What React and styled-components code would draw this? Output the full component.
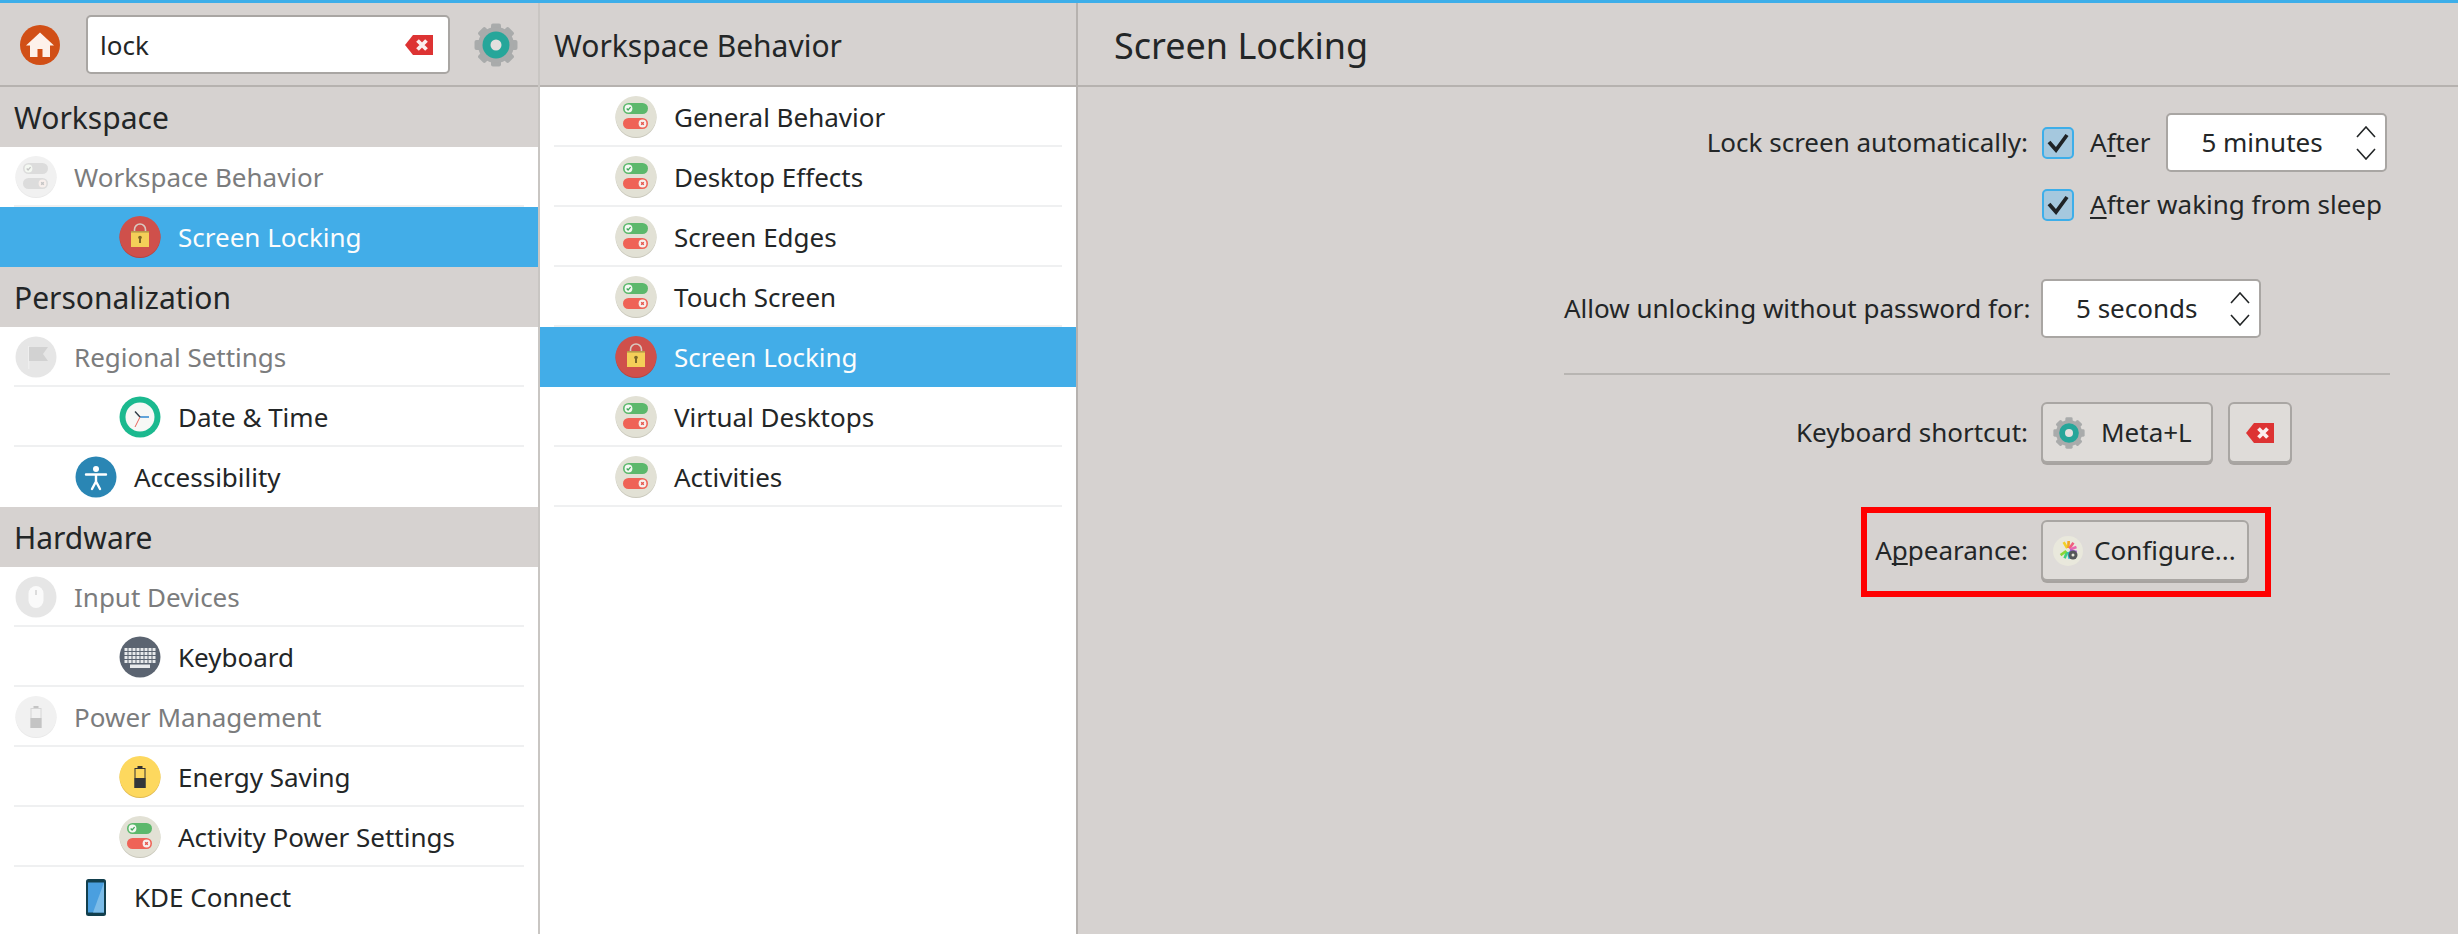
import React from 'react';
import styled, { createGlobalStyle } from 'styled-components';

const GlobalStyle = createGlobalStyle`
  html, body { margin: 0; padding: 0; background: #d6d2d0; }
  body { font-family: "Noto Sans", sans-serif; color: #232627; overflow: hidden; }
  u { text-decoration-thickness: 2px; text-underline-offset: 3px; text-decoration-skip-ink: none; }
`;

const Toggles = ({ faded }) => (
  <svg width="42" height="42" viewBox="0 0 42 42">
    <circle cx="21" cy="21.5" r="20.5" fill={faded ? '#e9e9e9' : '#c9c8bb'} />
    <circle cx="21" cy="20.5" r="20.5" fill={faded ? '#f1f1f1' : '#e2e1d5'} />
    <rect x="8" y="7" width="25" height="11" rx="5.5" fill={faded ? '#dcdcdc' : '#5cb86c'} />
    <rect x="8" y="22" width="25" height="11" rx="5.5" fill={faded ? '#dcdcdc' : '#ef6357'} />
    <circle cx="13.5" cy="12.5" r="3.9" fill="#f4f8f2" />
    <circle cx="27.5" cy="27.5" r="3.9" fill="#f7efec" />
    <path d="M11.700 12.500l1.400 1.500 2.500-2.900" fill="none" stroke={faded ? '#c4c4c4' : '#41a85c'} strokeWidth="1.3" />
    <path d="M26.200 26.200l2.600 2.600m0-2.600l-2.600 2.600" stroke={faded ? '#c4c4c4' : '#e4544a'} strokeWidth="1.3" />
  </svg>
);

const LockIcon = () => (
  <svg width="42" height="42" viewBox="0 0 42 42">
    <circle cx="21" cy="21.5" r="20.5" fill="#b9433f" />
    <circle cx="21" cy="20.5" r="20.5" fill="#cf504b" />
    <path d="M15.500 16v-2.500a5.500 5.500 0 0 1 11 0V16" fill="none" stroke="#d9c9c0" strokeWidth="1.6" />
    <rect x="12" y="15" width="18" height="16" fill="#f4cf58" />
    <rect x="12" y="15" width="18" height="1.6" fill="#b79a4a" />
    <circle cx="21" cy="21.5" r="1.8" fill="#7b6628" />
    <rect x="20" y="22" width="2" height="5" fill="#7b6628" />
  </svg>
);

const ClockIcon = () => (
  <svg width="42" height="42" viewBox="0 0 42 42">
    <circle cx="21" cy="21" r="20.5" fill="#1bb98f" />
    <circle cx="21" cy="21" r="14.5" fill="#f7f8f6" />
    <path d="M21 21h9" stroke="#3b8fd4" strokeWidth="1.6" />
    <path d="M21 21l-5-5.500" stroke="#2f3a45" strokeWidth="1.4" />
    <path d="M21 21l-5 10" stroke="#e8635a" strokeWidth="1" />
  </svg>
);

const AccessIcon = () => (
  <svg width="42" height="42" viewBox="0 0 42 42">
    <circle cx="21" cy="21" r="20.5" fill="#2a86b4" />
    <circle cx="21" cy="13" r="3" fill="#fff" />
    <path d="M11 18.500h20M21 18.500v7M21 25.500l-4 7.500M21 25.500l4 7.500" fill="none" stroke="#fff" strokeWidth="2.4" strokeLinecap="round" />
  </svg>
);

const KeyboardIcon = () => {
  const keys = [];
  for (let r = 0; r < 4; r++) {
    for (let c = 0; c < 8; c++) {
      keys.push(<rect key={`${r}-${c}`} x={5.5 + c * 4} y={12 + r * 4} width="3" height="3" fill="#e8eaec" />);
    }
  }
  return (
    <svg width="42" height="42" viewBox="0 0 42 42">
      <circle cx="21" cy="21" r="20.5" fill="#5b6471" />
      {keys}
      <rect x="11" y="28.5" width="20" height="3.5" fill="#e8eaec" />
    </svg>
  );
};

const BatteryIcon = ({ faded }) => (
  <svg width="42" height="42" viewBox="0 0 42 42">
    <circle cx="21" cy="21.5" r="20.5" fill={faded ? '#e9e9e9' : '#e0b94e'} />
    <circle cx="21" cy="20.5" r="20.5" fill={faded ? '#f1f1f1' : '#fdd85e'} />
    <rect x="18.5" y="10" width="5" height="3" fill={faded ? '#c4c4c4' : '#333'} />
    <rect x="16" y="12.5" width="10" height="19" fill="none" stroke={faded ? '#d6d6d6' : '#333'} strokeWidth="1" />
    <rect x="15.5" y="22" width="11" height="10" fill={faded ? '#c4c4c4' : '#33363a'} />
  </svg>
);

const FlagIcon = () => (
  <svg width="42" height="42" viewBox="0 0 42 42">
    <circle cx="21" cy="21" r="20.5" fill="#e6e6e6" />
    <rect x="13" y="10" width="1.4" height="23" fill="#eee" />
    <path d="M14 11h19l-5 7 5 7H14z" fill="#d2d2d2" />
  </svg>
);

const MouseIcon = () => (
  <svg width="42" height="42" viewBox="0 0 42 42">
    <circle cx="21" cy="21" r="20.5" fill="#e6e6e6" />
    <rect x="13.5" y="10" width="15" height="22" rx="7.5" fill="#fafafa" />
    <rect x="20.4" y="14" width="1.2" height="5" fill="#c8c8c8" />
  </svg>
);

const PhoneIcon = () => (
  <svg width="42" height="42" viewBox="0 0 42 42">
    <rect x="11" y="3" width="20" height="37" rx="2.5" fill="#123f4d" />
    <rect x="13" y="6.5" width="16" height="30" fill="#4a9fdf" />
    <path d="M29 6.500v30h-11z" fill="#7cbce8" />
  </svg>
);

const GearIcon = ({ size = 44 }) => (
  <svg width={size} height={size} viewBox="0 0 44 44">
    {[0, 45, 90, 135].map(a => (
      <rect key={a} x="17" y="0.5" width="10" height="43" rx="2" fill="#a9abab" transform={`rotate(${a} 22 22)`} />
    ))}
    <circle cx="22" cy="22" r="18" fill="#a9abab" />
    <circle cx="22" cy="22" r="13.5" fill="#26a69a" />
    <circle cx="22" cy="22" r="5.5" fill="#e3e0de" />
  </svg>
);

const ClearIcon = () => (
  <svg width="28" height="20" viewBox="0 0 28 20">
    <path d="M0 10L8 0h20v20H8z" fill="#dd3333" />
    <path d="M12.500 5.500l9 9m0-9l-9 9" stroke="#fbeeee" strokeWidth="3.8" />
  </svg>
);

const HomeIcon = () => (
  <svg width="40" height="40" viewBox="0 0 40 40">
    <circle cx="20" cy="20" r="20" fill="#d14f16" />
    <path d="M20 7.500L6 20.500h4V32h7.500v-8h5v8H30V20.500h4z" fill="#fdf1ea" />
  </svg>
);

const PaletteIcon = () => {
  const colors = ['#f2d027', '#f5a623', '#ef5f7f', '#e868b0', '#a05fd0', '#4f8fe8', '#2bb8d8', '#3fcf7f', '#8ad636'];
  return (
    <svg width="30" height="30" viewBox="0 0 30 30">
      <circle cx="15" cy="15" r="15" fill="#e9e8dc" />
      {colors.map((c, i) => (
        <rect key={c} x="13.900" y="5" width="2.600" height="7" fill={c} transform={`rotate(${i * 33 - 30} 15 14)`} />
      ))}
      <circle cx="20" cy="19" r="4.500" fill="#55575a" />
      <circle cx="20" cy="19" r="1.500" fill="#e9e8dc" />
    </svg>
  );
};

const Chevrons = () => (
  <svg width="22" height="34" viewBox="0 0 22 34">
    <path d="M2 11L11 1l9 10M2 23l9 10 9-10" fill="none" stroke="#232627" strokeWidth="1.600" />
  </svg>
);

const CheckMark = () => (
  <svg width="24" height="20" viewBox="0 0 24 20">
    <path d="M3 9l7 8L21 2" fill="none" stroke="#1f2326" strokeWidth="3.800" />
  </svg>
);

const Page = styled.div`
  height: 100vh;
  display: flex;
  flex-direction: column;
  border-top: 3px solid #3daee9;
  box-sizing: border-box;
`;

const Columns = styled.div`
  flex: 1;
  display: flex;
  min-height: 0;
`;

const Column = styled.div`
  width: ${p => p.$width}px;
  flex: none;
  display: flex;
  flex-direction: column;
  border-right: 2px solid ${p => p.$line};
`;

const Content = styled.div`
  flex: 1;
  min-width: 0;
`;

const Header = styled.div`
  height: 84px;
  flex: none;
  display: flex;
  align-items: center;
  box-sizing: border-box;
  border-bottom: 2px solid #b6b2af;
  padding-left: ${p => p.$pad}px;
  padding-top: ${p => p.$nudge || 0}px;
  font-size: ${p => p.$size}px;
  color: #232627;
`;

const HomeButton = styled.div`
  display: flex;
  margin-left: -6px;
  margin-right: 26px;
`;

const SearchBox = styled.div`
  width: 364px;
  height: 59px;
  box-sizing: border-box;
  background: #fff;
  border: 2px solid #a9a6a3;
  border-radius: 5px;
  display: flex;
  align-items: center;
  justify-content: space-between;
  padding: 0 15px 0 12px;
  font-size: 26px;
`;

const SearchGear = styled.div`
  display: flex;
  margin-left: 24px;
`;

const List = styled.div`
  flex: 1;
  background: #fff;
  display: flex;
  flex-direction: column;
`;

const Section = styled.div`
  height: 60px;
  flex: none;
  background: #d6d2d0;
  display: flex;
  align-items: center;
  padding-left: 14px;
  box-sizing: border-box;
  font-size: 30px;
`;

const Row = styled.div`
  height: 60px;
  flex: none;
  box-sizing: border-box;
  display: flex;
  align-items: center;
  gap: 17px;
  padding-left: ${p => p.$indent}px;
  font-size: 26px;
  position: relative;
  background: ${p => (p.$selected ? '#42ade8' : '#fff')};
  color: ${p => (p.$selected ? '#fcfcfc' : p.$faded ? '#7b7c7d' : '#232627')};

  &::after {
    content: '';
    display: ${p => (p.$selected || p.$plain ? 'none' : 'block')};
    position: absolute;
    left: 14px;
    right: 14px;
    bottom: 0;
    height: 2px;
    background: #eff0f1;
  }
`;

const Form = styled.div`
  width: 826px;
  margin-left: 486px;
  display: flex;
  flex-direction: column;
  font-size: 26px;
  line-height: 35px;
  position: relative;
`;

const FormRow = styled.div`
  display: grid;
  grid-template-columns: 464px auto;
  column-gap: 13px;
  align-items: center;
  margin-top: ${p => p.$top}px;
  position: relative;
`;

const Label = styled.div`
  text-align: right;
  white-space: nowrap;
`;

const Fields = styled.div`
  display: flex;
  align-items: center;
  gap: ${p => p.$gap || 0}px;
`;

const Check = styled.div`
  width: 32px;
  height: 32px;
  box-sizing: border-box;
  flex: none;
  background: #a5c8de;
  border: 2px solid #3daee9;
  border-radius: 5px;
  display: flex;
  align-items: center;
  justify-content: center;
  margin: 0 16px 0 1px;
`;

const Spin = styled.div`
  width: ${p => p.$width}px;
  height: 59px;
  box-sizing: border-box;
  background: #fff;
  border: 2px solid #a9a6a3;
  border-radius: 5px;
  display: flex;
  align-items: center;
  justify-content: space-between;
  padding: 0 8px 0 33px;
  margin-left: ${p => p.$left || 0}px;
`;

const Button = styled.div`
  width: ${p => p.$width}px;
  height: 61px;
  box-sizing: border-box;
  background: #dfdcd9;
  border: 2px solid #a9a6a3;
  border-radius: 6px;
  box-shadow: 0 2px 0 #a7a3a0;
  display: flex;
  align-items: center;
  gap: ${p => p.$gap || 0}px;
  padding-left: ${p => p.$pad}px;
`;

const Divider = styled.div`
  height: 2px;
  background: #b8b5b2;
  margin-top: 35px;
`;

const Highlight = styled.div`
  position: absolute;
  left: 297px;
  top: -13px;
  width: 410px;
  height: 90px;
  box-sizing: border-box;
  border: 6px solid #ff0000;
  pointer-events: none;
`;

const App = () => {
  const nav = [
    { section: 'Workspace' },
    { text: 'Workspace Behavior', icon: <Toggles faded />, indent: 15, faded: true },
    { text: 'Screen Locking', icon: <LockIcon />, indent: 119, selected: true },
    { section: 'Personalization' },
    { text: 'Regional Settings', icon: <FlagIcon />, indent: 15, faded: true },
    { text: 'Date & Time', icon: <ClockIcon />, indent: 119 },
    { text: 'Accessibility', icon: <AccessIcon />, indent: 75, plain: true },
    { section: 'Hardware' },
    { text: 'Input Devices', icon: <MouseIcon />, indent: 15, faded: true },
    { text: 'Keyboard', icon: <KeyboardIcon />, indent: 119 },
    { text: 'Power Management', icon: <BatteryIcon faded />, indent: 15, faded: true },
    { text: 'Energy Saving', icon: <BatteryIcon />, indent: 119 },
    { text: 'Activity Power Settings', icon: <Toggles />, indent: 119 },
    { text: 'KDE Connect', icon: <PhoneIcon />, indent: 75, plain: true },
  ];
  const modules = ['General Behavior', 'Desktop Effects', 'Screen Edges', 'Touch Screen', 'Screen Locking', 'Virtual Desktops', 'Activities'];

  return (
    <Page>
      <GlobalStyle />
      <Columns>
        <Column $width={538} $line="#c9c6c3">
          <Header $pad={26} $size={26} $nudge={1}>
            <HomeButton><HomeIcon /></HomeButton>
            <SearchBox>lock<ClearIcon /></SearchBox>
            <SearchGear><GearIcon /></SearchGear>
          </Header>
          <List>
            {nav.map(item => item.section ? (
              <Section key={item.section}>{item.section}</Section>
            ) : (
              <Row key={item.text} $indent={item.indent} $faded={item.faded} $selected={item.selected} $plain={item.plain}>
                {item.icon}{item.text}
              </Row>
            ))}
          </List>
        </Column>

        <Column $width={536} $line="#b6b2af">
          <Header $pad={14} $size={30} $nudge={2}>Workspace Behavior</Header>
          <List>
            {modules.map(name => (
              <Row key={name} $indent={75} $selected={name === 'Screen Locking'}>
                {name === 'Screen Locking' ? <LockIcon /> : <Toggles />}{name}
              </Row>
            ))}
          </List>
        </Column>

        <Content>
          <Header $pad={36} $size={36} $nudge={2}>Screen Locking</Header>
          <Form>
            <FormRow $top={26}>
              <Label>Lock screen automatically:</Label>
              <Fields>
                <Check><CheckMark /></Check>
                <span>A<u>f</u>ter</span>
                <Spin $width={221} $left={16}>5 minutes<Chevrons /></Spin>
              </Fields>
            </FormRow>
            <FormRow $top={15}>
              <span />
              <Fields>
                <Check><CheckMark /></Check>
                <span><u>A</u>fter waking from sleep</span>
              </Fields>
            </FormRow>
            <FormRow $top={57}>
              <Label>Allow unlocking without password for:</Label>
              <Fields>
                <Spin $width={220}>5 seconds<Chevrons /></Spin>
              </Fields>
            </FormRow>
            <Divider />
            <FormRow $top={27}>
              <Label>Keyboard shortcut:</Label>
              <Fields $gap={15}>
                <Button $width={172} $pad={10} $gap={16}><GearIcon size={32} />Meta+L</Button>
                <Button $width={64} $pad={16}><ClearIcon /></Button>
              </Fields>
            </FormRow>
            <FormRow $top={57}>
              <Label>A<u>p</u>pearance:</Label>
              <Fields>
                <Button $width={208} $pad={10} $gap={11}><PaletteIcon />Configure...</Button>
              </Fields>
              <Highlight />
            </FormRow>
          </Form>
        </Content>
      </Columns>
    </Page>
  );
};

export default App;
